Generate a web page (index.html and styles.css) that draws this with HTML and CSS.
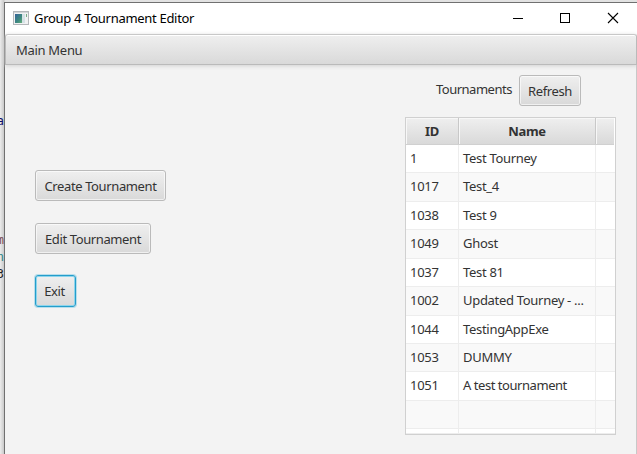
FILE: index.html
```html
<!DOCTYPE html>
<html lang="en">
<head>
<meta charset="utf-8">
<title>Group 4 Tournament Editor</title>
<link rel="stylesheet" href="styles.css">
</head>
<body>
<div class="behind">
  <span class="code code-a">a</span>
  <span class="code code-m">m</span>
  <span class="code code-n">n</span>
  <span class="code code-b">3</span>
</div>
<div class="window">
  <header class="titlebar">
    <svg class="app-icon" width="16" height="14" viewBox="0 0 16 14">
      <defs><linearGradient id="g" x2="1" y2="1"><stop offset="0" stop-color="#35639a"/><stop offset=".6" stop-color="#3e8a80"/><stop offset="1" stop-color="#67ae7a"/></linearGradient></defs>
      <rect x=".5" y=".5" width="15" height="13" fill="#f1f2f3" stroke="#b4b7ba"/>
      <path d="M1 1.5h14" stroke="#d3d6d9"/>
      <rect x="2" y="3" width="7" height="9" fill="url(#g)"/>
      <rect x="9" y="3" width="3" height="9" fill="#d5e2e6"/>
      <path d="M13.5 3v3" stroke="#78ad86"/>
    </svg>
    <span class="title">Group 4 Tournament Editor</span>
    <svg class="controls" width="107" height="12" viewBox="0 0 107 12" fill="none" stroke="#000">
      <path d="M0 6.5h10" shape-rendering="crispEdges"/>
      <rect x="47.5" y="1.5" width="9" height="9" shape-rendering="crispEdges"/>
      <path d="M95 1l10 10M105 1L95 11" stroke-width="1.1"/>
    </svg>
  </header>
  <nav class="menubar"><span class="menu">Main Menu</span></nav>
  <main class="content">
    <section class="actions">
      <button class="btn create">Create Tournament</button>
      <button class="btn edit">Edit Tournament</button>
      <button class="btn exit focused">Exit</button>
    </section>
    <section class="list">
      <div class="list-head"><span class="label">Tournaments</span><button class="btn refresh">Refresh</button></div>
      <div class="table">
        <div class="row head"><span>ID</span><span>Name</span><span></span></div>
        <div class="row"><span>1</span><span>Test Tourney</span><span></span></div>
        <div class="row odd"><span>1017</span><span>Test_4</span><span></span></div>
        <div class="row"><span>1038</span><span>Test 9</span><span></span></div>
        <div class="row odd"><span>1049</span><span>Ghost</span><span></span></div>
        <div class="row"><span>1037</span><span>Test 81</span><span></span></div>
        <div class="row odd"><span>1002</span><span>Updated Tourney - ...</span><span></span></div>
        <div class="row"><span>1044</span><span>TestingAppExe</span><span></span></div>
        <div class="row odd"><span>1053</span><span>DUMMY</span><span></span></div>
        <div class="row"><span>1051</span><span class="tight">A test tournament</span><span></span></div>
        <div class="row odd"><span></span><span></span><span></span></div>
        <div class="row"><span></span><span></span><span></span></div>
      </div>
    </section>
  </main>
</div>
</body>
</html>
```
FILE: styles.css
```css
* { box-sizing: border-box; }
body {
  margin: 0;
  width: 637px;
  height: 454px;
  overflow: hidden;
  padding: 2px 0 0 4px;
  background: linear-gradient(90deg, #ececec, #c9c9c9 4px, #e2e2e2 5px);
  font: 13px/18px "Noto Sans", "Open Sans", sans-serif;
  letter-spacing: -0.3px;
  color: #333;
}
.behind { position: absolute; left: 0; top: 0; width: 4px; height: 454px; overflow: hidden; }
.code { position: absolute; right: 0; font: 12px/14px "DejaVu Sans Mono", monospace; letter-spacing: 0; }
.code-a { top: 114px; color: #10106a; }
.code-m { top: 233px; color: #7a4a50; }
.code-n { top: 250px; color: #2b8585; }
.code-b { top: 267px; color: #222; }
.window { height: 452px; border-left: 1px solid #707070; border-top: 1px solid #707070; background: #f3f3f3; }
.titlebar { display: flex; align-items: center; height: 31px; padding: 0 17px 2px 8px; background: #fff; color: #000; }
.title { margin-left: 5px; }
.controls { margin-left: auto; }
.menubar {
  height: 31px;
  padding: 6px 10px;
  border: 1px solid #bababa;
  border-top-color: #c8c8c8;
  border-radius: 3px 3px 0 0;
  background: linear-gradient(#efefef, #d9d9d9);
  box-shadow: inset 0 1px #fff, 0 1px 4px #d2d2d2;
}
.menu { display: block; }
.content { display: flex; justify-content: space-between; height: 389px; padding: 0 20px 0 30px; border-right: 1px solid #c8c8c8; }
.btn {
  height: 31px;
  padding: 0;
  border: 1px solid #bababa;
  border-radius: 3px;
  background: linear-gradient(#efefef, #d9d9d9);
  box-shadow: inset 0 0 0 1px rgba(255, 255, 255, .6);
  font: inherit;
  letter-spacing: -0.38px;
  color: inherit;
  white-space: nowrap;
}
.actions { display: flex; flex-direction: column; align-items: flex-start; gap: 22px; padding-top: 105px; }
.create { width: 131px; }
.edit { width: 116px; }
.exit { width: 41px; height: 32px; margin-top: -1px; padding-right: 2px; }
.focused { border-color: #249dcb; box-shadow: 0 0 0 1px rgba(3, 158, 211, .25), inset 0 0 0 1px #8dd5ec; }
.list { width: 211px; padding-top: 10px; }
.list-head { display: flex; gap: 7px; padding-left: 31px; margin-bottom: 11px; }
.label { width: 76px; padding-top: 5px; white-space: nowrap; letter-spacing: -0.5px; }
.refresh { width: 62px; }
.table {
  display: grid;
  grid-template-rows: 27px 28px 29px 28px 29px 28px 29px 28px 28px 29px 28px 5px;
  height: 318px;
  border: 1px solid #d0d0d0;
  background: #fff;
  overflow: hidden;
}
.row { display: grid; grid-template-columns: 53px 137px 19px; border-bottom: 1px solid #ededed; }
.row > span { padding-left: 4px; border-right: 1px solid #ededed; line-height: 27px; white-space: nowrap; overflow: hidden; }
.row > span:last-child { border-right: 0; }
.row > .tight { letter-spacing: -0.45px; }
.odd { background: #f9f9f9; }
.head { width: 208px; grid-template-columns: 53px 137px 18px; background: linear-gradient(#efefef, #d9d9d9); border-color: #d0d0d0; font-weight: 700; text-align: center; }
.head > span { padding: 0; border-color: #c8c8c8; box-shadow: inset 1px 1px #f7f7f7; }
```
